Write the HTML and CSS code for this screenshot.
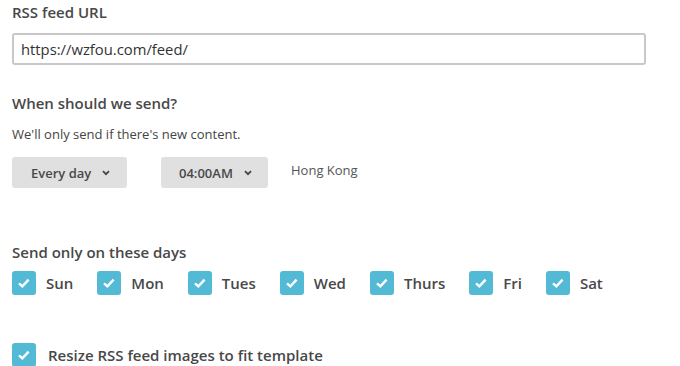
FILE: index.html
```html
<!DOCTYPE html>
<html>
<head>
<meta charset="utf-8">
<link rel="stylesheet" href="styles.css">
</head>
<body>
<div class="form">
  <div class="label label-url">RSS feed URL</div>
  <div class="input">https://wzfou.com/feed/</div>

  <div class="label label-when">When should we send?</div>
  <div class="hint">We'll only send if there's new content.</div>

  <div class="schedule">
    <div class="select select-freq">Every day
      <svg class="chev" width="8" height="6" viewBox="0 0 8 6"><path d="M1 1.2 L4 4.2 L7 1.2" fill="none" stroke="#444" stroke-width="1.8"/></svg>
    </div>
    <div class="select select-time">04:00AM
      <svg class="chev" width="8" height="6" viewBox="0 0 8 6"><path d="M1 1.2 L4 4.2 L7 1.2" fill="none" stroke="#444" stroke-width="1.8"/></svg>
    </div>
    <div class="tz">Hong Kong</div>
  </div>

  <div class="label label-days">Send only on these days</div>
  <div class="days">
    <div class="day"><span class="box"><svg width="16" height="16" viewBox="0 0 16 16"><path d="M3 8.3 L6.4 11.4 L12.6 4.6" fill="none" stroke="#fff" stroke-width="2.4"/></svg></span>Sun</div>
    <div class="day"><span class="box"><svg width="16" height="16" viewBox="0 0 16 16"><path d="M3 8.3 L6.4 11.4 L12.6 4.6" fill="none" stroke="#fff" stroke-width="2.4"/></svg></span>Mon</div>
    <div class="day"><span class="box"><svg width="16" height="16" viewBox="0 0 16 16"><path d="M3 8.3 L6.4 11.4 L12.6 4.6" fill="none" stroke="#fff" stroke-width="2.4"/></svg></span>Tues</div>
    <div class="day"><span class="box"><svg width="16" height="16" viewBox="0 0 16 16"><path d="M3 8.3 L6.4 11.4 L12.6 4.6" fill="none" stroke="#fff" stroke-width="2.4"/></svg></span>Wed</div>
    <div class="day"><span class="box"><svg width="16" height="16" viewBox="0 0 16 16"><path d="M3 8.3 L6.4 11.4 L12.6 4.6" fill="none" stroke="#fff" stroke-width="2.4"/></svg></span>Thurs</div>
    <div class="day"><span class="box"><svg width="16" height="16" viewBox="0 0 16 16"><path d="M3 8.3 L6.4 11.4 L12.6 4.6" fill="none" stroke="#fff" stroke-width="2.4"/></svg></span>Fri</div>
    <div class="day"><span class="box"><svg width="16" height="16" viewBox="0 0 16 16"><path d="M3 8.3 L6.4 11.4 L12.6 4.6" fill="none" stroke="#fff" stroke-width="2.4"/></svg></span>Sat</div>
  </div>

  <div class="resize"><span class="box"><svg width="16" height="16" viewBox="0 0 16 16"><path d="M3 8.3 L6.4 11.4 L12.6 4.6" fill="none" stroke="#fff" stroke-width="2.4"/></svg></span>Resize RSS feed images to fit template</div>
</div>
</body>
</html>
```
FILE: styles.css
```css
html, body {
  margin: 0;
  padding: 0;
  background: #fff;
}
body {
  font-family: "Open Sans", "Noto Sans", sans-serif;
  color: #444;
  overflow: hidden;
}
.form {
  padding: 0 0 0 12px;
  width: 634px;
}
.label {
  font-size: 15px;
  font-weight: 600;
  color: #484848;
  line-height: 20px;
}
.label-url {
  margin-top: 2px;
}
.input {
  margin-top: 11px;
  height: 32px;
  box-sizing: border-box;
  border: 2px solid #c8c8c8;
  border-radius: 3px;
  padding: 0 7px;
  font-size: 14.8px;
  line-height: 28px;
  color: #333;
}
.label-when {
  margin-top: 28px;
}
.hint {
  margin-top: 13px;
  font-size: 13px;
  line-height: 16px;
  color: #444;
}
.schedule {
  margin-top: 15px;
  display: flex;
  align-items: flex-start;
}
.select {
  height: 31px;
  box-sizing: border-box;
  background: #e0e0e0;
  border-radius: 3px;
  display: flex;
  align-items: center;
  font-size: 13px;
  font-weight: 600;
  color: #484848;
  padding-left: 19px;
}
.select-freq {
  width: 115px;
}
.select-time {
  width: 107px;
  margin-left: 34px;
  padding-left: 18px;
}
.chev {
  margin-left: 11px;
  margin-top: 1px;
}
.tz {
  margin-left: 23px;
  font-size: 13px;
  line-height: 26px;
  color: #555;
}
.label-days {
  margin-top: 54px;
}
.days {
  margin-top: 9px;
  display: flex;
  gap: 24px;
}
.day, .resize {
  display: flex;
  align-items: center;
  font-size: 15px;
  font-weight: 600;
  color: #484848;
  line-height: 24px;
}
.box {
  width: 24px;
  height: 24px;
  background: #52bad5;
  border-radius: 3px;
  display: inline-flex;
  align-items: center;
  justify-content: center;
  margin-right: 10px;
}
.resize {
  margin-top: 48px;
}
.resize .box {
  margin-right: 12px;
}
```
